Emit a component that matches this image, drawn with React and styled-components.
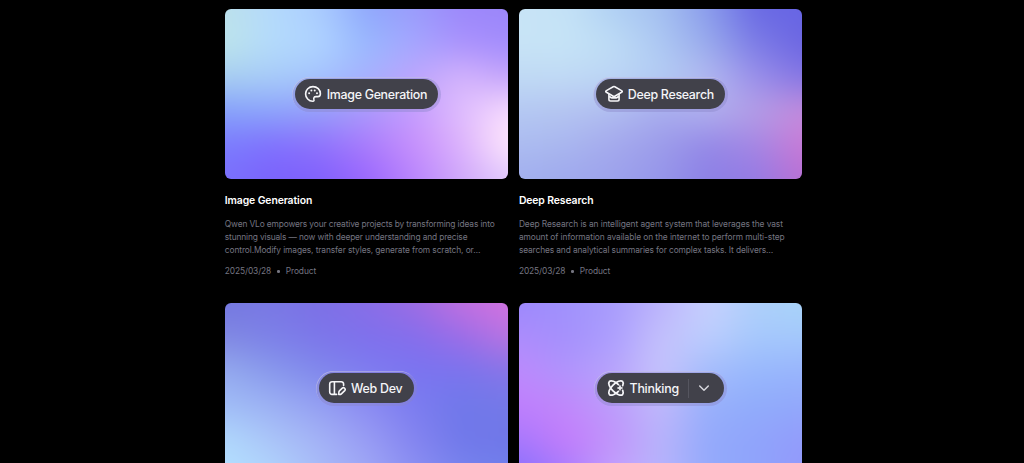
import React from "react";
import styled, { createGlobalStyle } from "styled-components";

const GlobalStyle = createGlobalStyle`
  html, body { margin: 0; background: #000; }
  body { height: 463px; overflow: hidden; font-family: Inter, "Liberation Sans", sans-serif; }
  * { box-sizing: border-box; }
`;

const Page = styled.main`
  height: 463px;
  overflow: hidden;
  padding: 9.3px 0 0 224.8px;
  background: #000;
`;

const Grid = styled.div`
  display: grid;
  grid-template-columns: 283.4px 283.4px;
  column-gap: 10.7px;
  row-gap: 25.6px;
`;

const Card = styled.article`
  display: flex;
  flex-direction: column;
`;

const Cover = styled.div`
  display: grid;
  grid-template: 170px / 283.4px;
  border-radius: 6px;
  overflow: hidden;
`;

/* Extends past the cover so that the blur never picks up the page behind it. */
const Mesh = styled.div`
  grid-area: 1 / 1;
  display: grid;
  margin: -36px;
  filter: blur(12px);
`;

const columnStops = (colors) =>
  colors.map((c, i) => `${c} ${(36 + (i * 283.4) / 6).toFixed(1)}px`).join(", ");

/* One horizontal band of the mesh; it fades in over the band above it. */
const Band = styled.div`
  grid-area: 1 / 1;
  background: linear-gradient(to right, ${(p) => columnStops(p.$colors)});
  ${(p) =>
    p.$row > 0 &&
    `mask-image: linear-gradient(to bottom, transparent ${36 + (p.$row - 1) * 34}px, #000 ${36 + p.$row * 34}px);`}
`;

const PillRing = styled.div`
  grid-area: 1 / 1;
  z-index: 1;
  place-self: center;
  padding: 2.5px 3px 3px;
  border-radius: 20px;
  background: rgba(138, 132, 200, 0.4);
  box-shadow: inset 0.5px 0.7px 0.5px rgba(255, 255, 255, 0.35);
`;

const Pill = styled.div`
  display: flex;
  align-items: center;
  width: ${(p) => p.$width}px;
  height: 30px;
  padding-left: ${(p) => p.$inset}px;
  border-radius: 15px;
  background: #41414a;
  color: #f5f5f8;
`;

const PillIcon = styled.svg`
  flex: none;
  width: 18px;
  height: 18px;
  margin-right: ${(p) => p.$gap}px;
  fill: none;
  stroke: currentColor;
  stroke-width: 1.6;
  stroke-linecap: round;
  stroke-linejoin: round;
`;

const PillLabel = styled.span`
  position: relative;
  top: 0.6px;
  font-size: 12.4px;
  font-weight: 450;
  line-height: 18px;
  white-space: nowrap;
  letter-spacing: ${(p) => p.$tracking}px;
`;

const Divider = styled.span`
  width: 1px;
  height: 19px;
  margin-left: 9.5px;
  background: #55555f;
`;

const Chevron = styled.svg`
  width: 12px;
  height: 12px;
  margin-left: 8.3px;
  fill: none;
  stroke: #d4d4da;
  stroke-width: 1.5;
  stroke-linecap: round;
  stroke-linejoin: round;
`;

const Title = styled.h2`
  margin: 13.4px 0 0;
  font-size: 10.4px;
  line-height: 16px;
  font-weight: 600;
  letter-spacing: -0.1px;
  color: #fff;
`;

const Description = styled.p`
  display: flex;
  flex-direction: column;
  margin: 9.2px 0 0;
  font-size: 8.4px;
  line-height: 13px;
  color: #757581;
`;

const Line = styled.span`
  white-space: pre;
  letter-spacing: ${(p) => p.$tracking}px;
`;

const Meta = styled.div`
  display: flex;
  align-items: center;
  gap: 6px;
  margin-top: 8px;
  font-size: 8.4px;
  line-height: 13px;
  letter-spacing: -0.1px;
  color: #757581;
`;

const Dot = styled.span`
  width: 2.6px;
  height: 2.6px;
  border-radius: 50%;
  background: #757581;
`;

const icons = {
  palette: (
    <>
      <path d="M9 1.600c-4.200 0-7.400 3.200-7.400 7.300 0 3.700 3 7.400 7.200 7.400 1.200 0 1.400-.8 1.100-1.900-.4-1.700.3-2.700 1.900-2.800h2.100c1.700 0 2.500-1.200 2.500-2.900C16.400 4.800 13.100 1.600 9 1.600Z" />
      <g fill="currentColor" stroke="none">
        <circle cx="5.100" cy="8.300" r="1" />
        <circle cx="7.400" cy="5.500" r="1" />
        <circle cx="10.700" cy="5.500" r="1" />
        <circle cx="13" cy="8.300" r="1" />
      </g>
    </>
  ),
  cap: (
    <>
      <path d="M8.200 1.700a1.700 1.700 0 0 1 1.600 0l6.800 3.900c.9.500.9 1.200 0 1.700l-6.800 3.900a1.700 1.700 0 0 1-1.600 0L1.400 7.300c-.9-.5-.9-1.200 0-1.700Z" />
      <path d="M3.900 9.300v5c0 1.100.6 1.700 1.700 1.700h6.800c1.100 0 1.700-.6 1.700-1.700v-5M4.100 11.300c1.200.2 1.500 1.600 2.800 1.600h4.200c1.300 0 1.600-1.400 2.800-1.600" />
    </>
  ),
  web: (
    <>
      <path d="M8.600 15.400H4A2.300 2.300 0 0 1 1.700 13.100V5A2.300 2.300 0 0 1 4 2.700h9.300A2.300 2.300 0 0 1 15.600 5v1.500M6.400 2.900v12.400" />
      <path d="m11.400 11.900 2.900-2.700a1.700 1.700 0 0 1 2.400 2.400l-3.300 3.300c-.5.500-1.300.7-2.600.6-.1-1.500-.2-2.700.6-3.600Z" />
    </>
  ),
  atom: (
    <>
      <g strokeWidth="1.75">
        <ellipse cx="9" cy="9" rx="9.300" ry="4.200" transform="rotate(45 9 9)" />
        <ellipse cx="9" cy="9" rx="9.300" ry="4.200" transform="rotate(-45 9 9)" />
      </g>
      <path fill="#41414a" stroke="#41414a" strokeWidth="2.600" d="m13 6.500.8 1.700 1.900.8-1.900.8-.8 1.700-.8-1.700-1.900-.8 1.900-.8Z" />
      <path fill="currentColor" strokeWidth="0.700" d="m13 6.500.8 1.700 1.900.8-1.900.8-.8 1.700-.8-1.700-1.900-.8 1.900-.8Z" />
    </>
  ),
};

const cards = [
  {
    label: "Image Generation", icon: "palette", width: 143.5, inset: 9.3, gap: 4.700, tracking: -0.29,
    title: "Image Generation",
    text: [
      ["Qwen VLo empowers your creative projects by transforming ideas into", -0.13],
      ["stunning visuals — now with deeper understanding and precise", -0.14],
      ["control.Modify images, transfer styles, generate from scratch, or…", -0.1],
    ],
    mesh: [
      ["#bce0ec", "#b4dafc", "#aaccff", "#8fa8fc", "#9a9cfb", "#9c88fb", "#9b86fa"],
      ["#bde5ea", "#b4dbfc", "#b0d4ff", "#98b8fe", "#a4a6ff", "#a991fc", "#a28cfc"],
      ["#a8cff0", "#a8ccf8", "#a4c4fe", "#a6b2fe", "#bda4fc", "#d4b4fc", "#c4a4fb"],
      ["#86a2fb", "#8ca4fb", "#969ffa", "#ab98fc", "#c59cfd", "#dfbdfd", "#f8dcfd"],
      ["#7b7bfd", "#8070fd", "#8e72fc", "#a97bfc", "#c78ffc", "#dcb2fc", "#ffe8fc"],
      ["#7a70fc", "#7a62fc", "#8060fc", "#9a66fd", "#b884fc", "#cfa8fb", "#e0c8fc"],
    ],
  },
  {
    label: "Deep Research", icon: "cap", width: 129.5, inset: 9, gap: 5, tracking: -0.29,
    title: "Deep Research",
    text: [
      ["Deep Research is an intelligent agent system that leverages the vast", -0.08],
      ["amount of information available on the internet to perform multi-step", -0.08],
      ["searches and analytical summaries for complex tasks. It delivers…", -0.12],
    ],
    mesh: [
      ["#c8e4f6", "#c4e2f6", "#b0d0f4", "#a4c0f0", "#8a9cec", "#6a6ae4", "#6765e4"],
      ["#c8e4f6", "#c6e4f6", "#bedcf5", "#adc8f3", "#98aaec", "#7c7ce6", "#6c66e2"],
      ["#c0daf4", "#c0daf5", "#bcd6f5", "#b4cef4", "#b2b8f0", "#9a90ea", "#8476e4"],
      ["#b4c8f2", "#b4c4f1", "#b0bcf0", "#a8acee", "#b0b0ee", "#b49ee6", "#c58cdc"],
      ["#acbcf0", "#a9b6ef", "#a4a9ed", "#9c9cea", "#9488e7", "#a486e4", "#c97ad6"],
      ["#a2b0ee", "#9fa9ed", "#9da2ec", "#9696ea", "#8c80e6", "#947ae4", "#b870d4"],
    ],
  },
  {
    label: "Web Dev", icon: "web", width: 95, inset: 9, gap: 5, tracking: -0.24,
    mesh: [
      ["#7478e0", "#7a78e4", "#7c70e6", "#886ee8", "#9c6ce4", "#c070e0", "#d272e0"],
      ["#8088e2", "#7c80e8", "#7c76ea", "#7e70ec", "#846eec", "#9a6ce8", "#b874e2"],
      ["#94aaee", "#8898ec", "#8088ec", "#7e7cf0", "#7a74f0", "#7a74ee", "#8674e8"],
      ["#a0bcf6", "#9cb0f4", "#949ff2", "#8c8cf2", "#7c7cf0", "#7078ea", "#747ae8"],
      ["#b0d8fc", "#aac4f8", "#a4b2f6", "#989cf4", "#8484f0", "#7078ea", "#7076e8"],
      ["#b4e0ff", "#b0d4fc", "#a8bcf8", "#a0a8f6", "#8c90f2", "#7884ee", "#7080ec"],
    ],
  },
  {
    label: "Thinking", icon: "atom", width: 126.5, inset: 9.600, gap: 4.700, tracking: -0.26, menu: true,
    mesh: [
      ["#9c88fc", "#a092fc", "#a89cfc", "#bcb4fc", "#c8d0fe", "#aed0fb", "#a8d4f8"],
      ["#ac8cfc", "#a490fc", "#ac9efd", "#c4c0fc", "#bccefd", "#a6c8fc", "#a4c8fc"],
      ["#bc8afc", "#b094fc", "#b8a4fc", "#c6c4fc", "#a4bcfc", "#98b8fc", "#98b4fc"],
      ["#c07efc", "#c088fb", "#bc9cfb", "#c0b8fb", "#98b0fb", "#90acfb", "#92a8fb"],
      ["#a878fc", "#c47cfb", "#c094fb", "#b8b4fb", "#94aafb", "#90a4fb", "#929cfb"],
      ["#8870fc", "#a87cfc", "#c4a0fc", "#b8b4fc", "#94aafb", "#8ea4fb", "#9498fb"],
    ],
  },
];

function FeatureCard({ card }) {
  return (
    <Card>
      <Cover>
        <Mesh>
          {card.mesh.map((colors, row) => (
            <Band key={row} $row={row} $colors={colors} />
          ))}
        </Mesh>
        <PillRing>
          <Pill $width={card.width} $inset={card.inset}>
            <PillIcon viewBox="0 0 18 18" $gap={card.gap}>{icons[card.icon]}</PillIcon>
            <PillLabel $tracking={card.tracking}>{card.label}</PillLabel>
            {card.menu && (
              <>
                <Divider />
                <Chevron viewBox="0 0 12 12"><path d="m1.700 4 4.300 4.200L10.300 4" /></Chevron>
              </>
            )}
          </Pill>
        </PillRing>
      </Cover>
      {card.title && (
        <>
          <Title>{card.title}</Title>
          <Description>
            {card.text.map(([line, tracking]) => (
              <Line key={line} $tracking={tracking}>{line}</Line>
            ))}
          </Description>
          <Meta>
            <span>2025/03/28</span>
            <Dot />
            <span>Product</span>
          </Meta>
        </>
      )}
    </Card>
  );
}

export default function App() {
  return (
    <>
      <GlobalStyle />
      <Page>
        <Grid>
          {cards.map((card) => (
            <FeatureCard key={card.label} card={card} />
          ))}
        </Grid>
      </Page>
    </>
  );
}
